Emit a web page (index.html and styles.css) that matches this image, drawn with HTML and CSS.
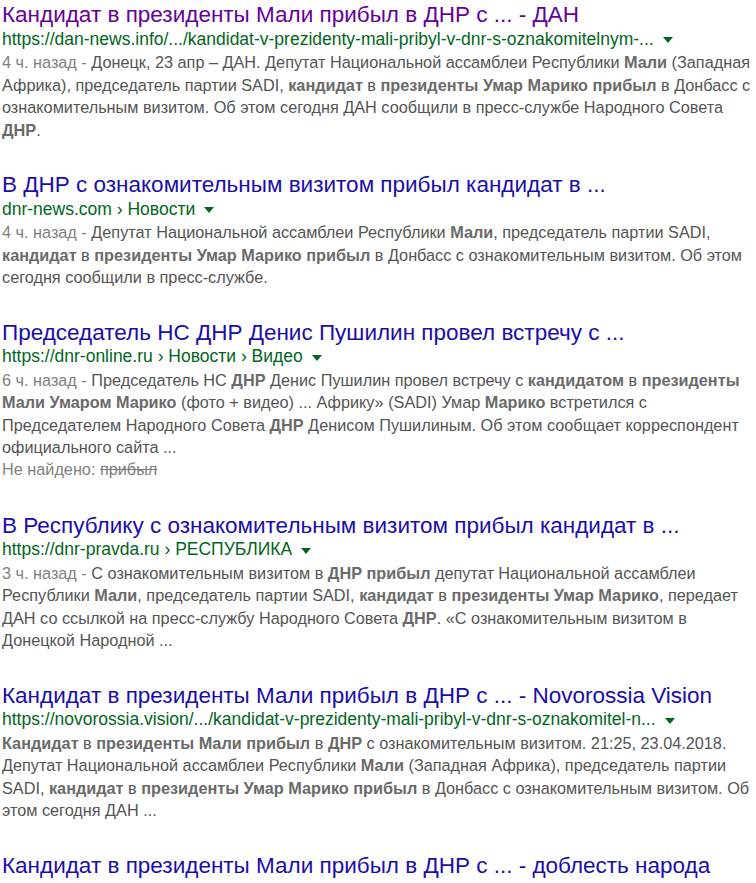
FILE: index.html
```html
<!DOCTYPE html>
<html lang="ru">
<head>
  <meta charset="UTF-8" />
  <meta name="viewport" content="width=device-width, initial-scale=1" />
  <title>Кандидат в президенты Мали прибыл в ДНР - Поиск</title>
  <link rel="stylesheet" href="styles.css">
</head>
<body>

  <div class="results">
    <div class="g">
      <h3 class="r"><a href="#" class="visited">Кандидат в президенты Мали прибыл в ДНР с ... - ДАН</a></h3>
      <div class="url"><cite>https://dan-news.info/.../kandidat-v-prezidenty-mali-pribyl-v-dnr-s-oznakomitelnym-...</cite><span class="arrow"></span></div>
      <div class="st"><span class="date">4 ч. назад - </span>Донецк, 23 апр – ДАН. Депутат Национальной ассамблеи Республики <b>Мали</b> (Западная Африка), председатель партии SADI, <b>кандидат</b> в <b>президенты Умар Марико прибыл</b> в Донбасс с ознакомительным визитом. Об этом сегодня ДАН сообщили в пресс-службе Народного Совета <b>ДНР</b>.</div>
    </div>

    <div class="g">
      <h3 class="r"><a href="#">В ДНР с ознакомительным визитом прибыл кандидат в ...</a></h3>
      <div class="url"><cite>dnr-news.com › Новости</cite><span class="arrow"></span></div>
      <div class="st"><span class="date">4 ч. назад - </span>Депутат Национальной ассамблеи Республики <b>Мали</b>, председатель партии SADI, <b>кандидат</b> в <b>президенты Умар Марико прибыл</b> в Донбасс с ознакомительным визитом. Об этом сегодня сообщили в пресс-службе.</div>
    </div>

    <div class="g">
      <h3 class="r"><a href="#">Председатель НС ДНР Денис Пушилин провел встречу с ...</a></h3>
      <div class="url"><cite>https://dnr-online.ru › Новости › Видео</cite><span class="arrow"></span></div>
      <div class="st"><span class="date">6 ч. назад - </span>Председатель НС <b>ДНР</b> Денис Пушилин провел встречу с <b>кандидатом</b> в <b>президенты Мали Умаром Марико</b> (фото + видео) ... Африку» (SADI) Умар <b>Марико</b> встретился с Председателем Народного Совета <b>ДНР</b> Денисом Пушилиным. Об этом сообщает корреспондент официального сайта ...</div>
      <div class="missing">Не найдено: <s>прибыл</s></div>
    </div>

    <div class="g">
      <h3 class="r"><a href="#">В Республику с ознакомительным визитом прибыл кандидат в ...</a></h3>
      <div class="url"><cite>https://dnr-pravda.ru › РЕСПУБЛИКА</cite><span class="arrow"></span></div>
      <div class="st"><span class="date">3 ч. назад - </span>С ознакомительным визитом в <b>ДНР прибыл</b> депутат Национальной ассамблеи Республики <b>Мали</b>, председатель партии SADI, <b>кандидат</b> в <b>президенты Умар Марико</b>, передает ДАН со ссылкой на пресс-службу Народного Совета <b>ДНР</b>. «С ознакомительным визитом в Донецкой Народной ...</div>
    </div>

    <div class="g">
      <h3 class="r"><a href="#">Кандидат в президенты Мали прибыл в ДНР с ... - Novorossia Vision</a></h3>
      <div class="url"><cite>https://novorossia.vision/.../kandidat-v-prezidenty-mali-pribyl-v-dnr-s-oznakomitel-n...</cite><span class="arrow"></span></div>
      <div class="st"><b>Кандидат</b> в <b>президенты Мали прибыл</b> в <b>ДНР</b> с ознакомительным визитом. 21:25, 23.04.2018. Депутат Национальной ассамблеи Республики <b>Мали</b> (Западная Африка), председатель партии SADI, <b>кандидат</b> в <b>президенты Умар Марико прибыл</b> в Донбасс с ознакомительным визитом. Об этом сегодня ДАН ...</div>
    </div>

    <div class="g">
      <h3 class="r"><a href="#">Кандидат в президенты Мали прибыл в ДНР с ... - доблесть народа</a></h3>
    </div>
  </div>

</body>
</html>
```

FILE: styles.css
```css
* {
  box-sizing: border-box;
  margin: 0;
  padding: 0;
}
body {
  background-color: #fff;
  font-family: "Liberation Sans", Arial, sans-serif;
  color: #545454;
}
.results {
  width: 752px;
  padding: 2px 0 0 2px;
}
.g {
  margin-bottom: 31px;
}
.r {
  font-size: 22.5px;
  font-weight: normal;
  line-height: 25px;
  white-space: nowrap;
}
.r a {
  color: #1a0dab;
  text-decoration: none;
}
.r a.visited {
  color: #660099;
}
.url {
  display: flex;
  align-items: center;
  height: 24px;
  font-size: 17.5px;
  white-space: nowrap;
}
.url cite {
  color: #006621;
  font-style: normal;
}
.arrow {
  width: 0;
  height: 0;
  margin: 2px 0 0 9px;
  border-top: 6px solid #006621;
  border-left: 5px solid transparent;
  border-right: 5px solid transparent;
}
.st {
  font-size: 16.25px;
  line-height: 22.5px;
}
.st b {
  color: #6a6a6a;
}
.date {
  color: #808080;
}
.missing {
  font-size: 16.25px;
  line-height: 20px;
  padding-bottom: 3px;
  color: #808080;
}
```
